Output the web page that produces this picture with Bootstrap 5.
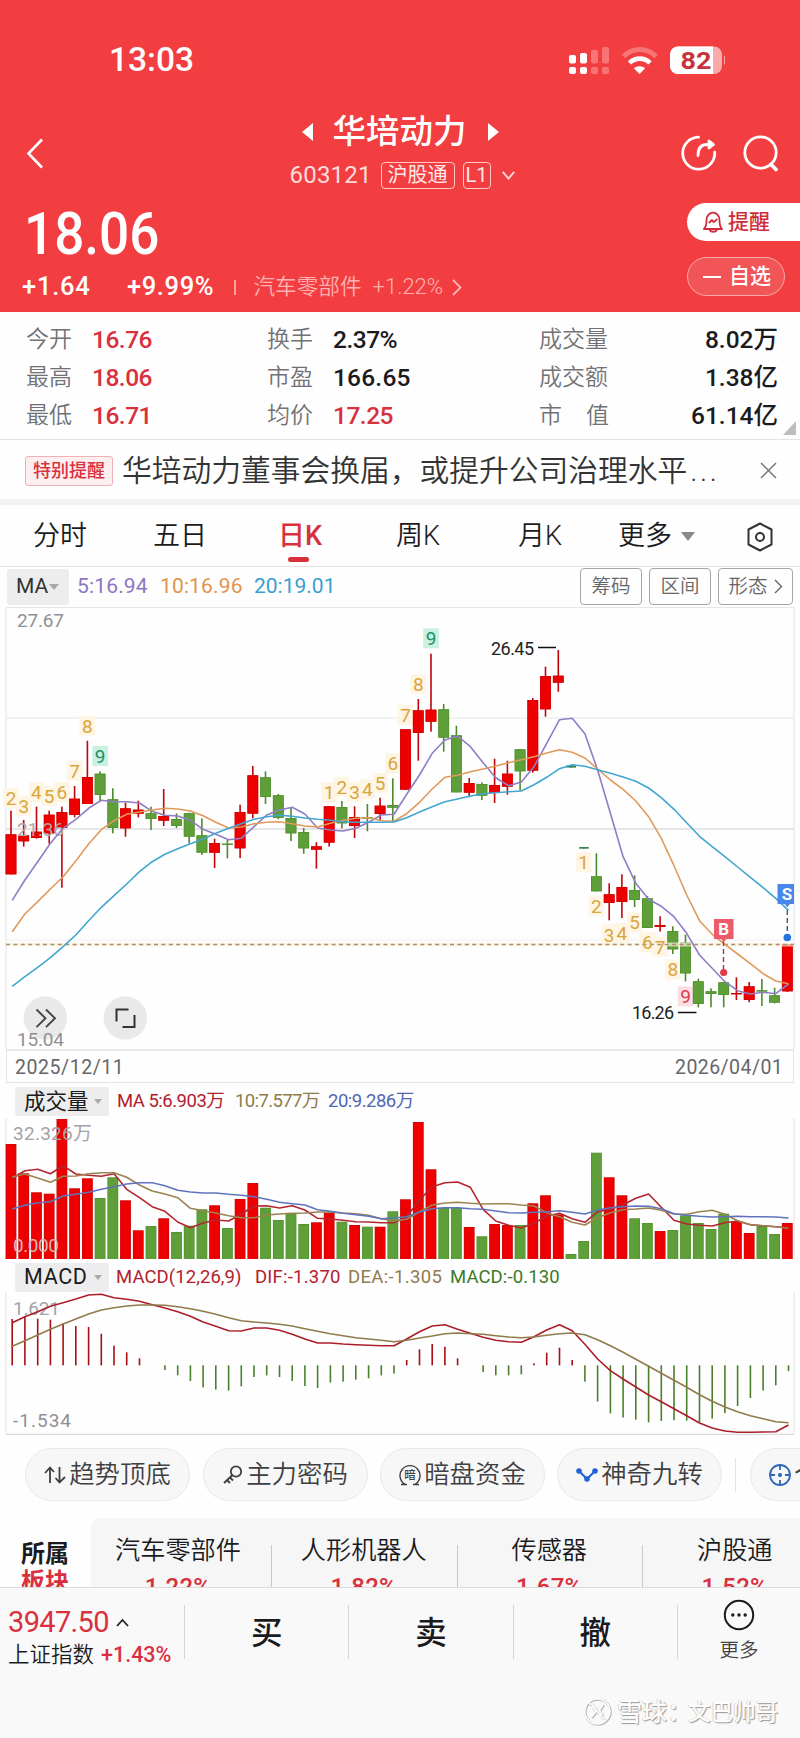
<!DOCTYPE html>
<html lang="zh-CN">
<head>
<meta charset="utf-8">
<meta name="viewport" content="width=device-width, initial-scale=1">
<title>华培动力 603121</title>
<link href="https://cdn.jsdelivr.net/npm/bootstrap@5.3.0/dist/css/bootstrap.min.css" rel="stylesheet">
<style>
  :root { --brand:#f23e41; --up:#d9303e; --ink:#1b1b1d; --sub:#727276; --line:#e4e4e6; }
  body { width:800px; height:1738px; overflow:hidden; margin:0; background:#fefefe; color:var(--ink);
         font-family:Roboto,"Noto Sans CJK SC",sans-serif; line-height:1; }
  svg { display:block; flex:none; }
  svg text { font-family:Roboto,"Noto Sans CJK SC",sans-serif; }
  .fit { display:inline-block; white-space:nowrap; flex:none; }
  .up { color:var(--up); }
  .hero { background:var(--brand); height:312px; color:#fff; padding-top:42px; }
  .status { height:35px; padding:0 75px 0 109px; }
  .clock { font-size:33.5px; font-weight:500; }
  .topnav { display:grid; grid-template-columns:150px 1fr 150px; height:84px; margin-top:34px; }
  .stock-name { font-size:33.5px; font-weight:500; height:42px; }
  .stock-code { font-size:24px; height:44px; padding-left:4px; color:#ffdcdc; }
  .tagbox { border:1.5px solid #ffc9c9; border-radius:4px; height:27px; font-size:20px; color:#ffe9e9; }
  .quote { height:117px; }
  .price { font-size:59px; font-weight:500; height:60px; padding:9px 0 0 24px; }
  .price .fit { transform:scaleX(.9); transform-origin:left; }
  .delta { font-size:25.5px; font-weight:500; height:34px; margin-top:15px; padding-left:22px; }
  .delta .sector { font-size:21.6px; font-weight:350; color:#ffb3b3; }
  .pill-r { width:113px; height:38px; border-radius:19px 0 0 19px; font-size:21px; font-weight:500; margin-top:8px; padding-left:16px; color:#cf2b3a; }
  .pill-o { width:98px; height:39px; border-radius:20px; font-size:21px; font-weight:500; margin-top:16px; border:1.5px solid #fba9aa; background:#f15558; padding-left:15px; }
  .stats { display:grid; grid-template-columns:66px 175px 66px 206px 1fr; grid-auto-rows:38px; align-items:center;
           height:128px; padding:9px 22px 5px 26px; position:relative; border-bottom:1.5px solid var(--line); align-content:center; }
  .stats .k { font-size:23px; font-weight:350; color:var(--sub); }
  .stats .v { font-size:24.5px; font-weight:500; padding-top:2px; }
  .corner { position:absolute; right:4px; bottom:4px; }
  .notice { height:59px; padding:2px 0 0 25px; }
  .notice-tag { width:88px; height:30px; border:1.5px solid #f0b0b6; border-radius:3px; background:#fdeef0; color:var(--up); font-size:18px; font-weight:500; }
  .notice-text { font-size:29.75px; font-weight:350; color:#333; margin-left:9px; width:602px; white-space:nowrap; }
  .notice-text .dots { letter-spacing:2.6px; margin-left:3px; }
  .band { height:6px; background:#f3f3f4; }
  .tabs { height:62px; border-bottom:1.5px solid var(--line); font-size:27px; font-weight:350; padding-left:33px; padding-top:2px; position:relative; }
  .tabs .cell { width:120px; flex:none; }
  .tabs .on { color:var(--up); font-weight:500; position:relative; }
  .tabs .on::after { content:""; position:absolute; left:10px; top:37px; width:21px; height:5px; border-radius:3px; background:var(--up); }
  .ma-row { height:39px; padding-left:7px; font-size:21px; }
  .drop { background:#ededee; border-radius:3px; }
  .tool { height:37px; border:1.5px solid #a5a5a8; border-radius:4px; font-size:19.5px; font-weight:350; color:#666; }
  .date-row { height:33px; font-size:19.5px; color:#66666a; margin:0 6px; border:solid var(--line); border-width:1px; padding:2px 7px 0 8px; }
  .sub-head { height:35px; padding:2px 0 0 15px; font-size:18.5px; }
  .sub-head .drop { width:94px; height:29px; padding-left:9px; font-size:21.5px; }
  .chips { height:83px; padding:13px 0 0 25px; overflow:hidden; }
  .chip { height:53px; width:165px; border:1.5px solid #e8e8ea; border-radius:27px; background:#f7f7f8; font-size:25.4px; font-weight:350; color:#3f3f42; flex:none; padding-top:1px; }
  .boards { height:69px; overflow:hidden; }
  .boards-t { width:91px; padding:22px 0 0 21px; font-size:24px; font-weight:700; line-height:28px; flex:none; }
  .boards-l { background:#f6f6f7; border-radius:8px 0 0 0; }
  .board { width:185.5px; padding-top:19px; font-size:25.2px; font-weight:350; text-align:center; line-height:28px; flex:none; position:relative; }
  .board .pct { font-size:24px; font-weight:500; margin-top:10px; line-height:24px; }
  .board + .board::before { content:""; position:absolute; left:0; top:27px; bottom:0; width:1px; background:#c9c9cc; }
  .dock { height:151px; background:#f9f9f9; border-top:1.5px solid #dcdcde; }
  .dock-row { height:54px; margin-top:17px; }
  .act { width:164.3px; border-left:1.5px solid #d5d5d7; font-size:31.5px; font-weight:500; height:54px; padding-top:3px; flex:none; }
  .wm { color:#fdfdfd; text-shadow:1px 1px 1px #999,-.5px -.5px 0 #bbb; font-size:22.5px; font-weight:500; padding:0 23px 0 584px; height:36px; margin-top:35px; }
</style>
</head>
<body>

<header class="hero">
  <div class="status d-flex align-items-center justify-content-between">
    <span class="clock fit" data-w="88">13:03</span>
    <svg width="160" height="32" viewBox="564 42 160 32">
      <g fill="#fff">
        <rect x="568" y="53" width="7" height="8.5" rx="2"/><rect x="568" y="65" width="7" height="7" rx="2"/>
        <rect x="579" y="51" width="7" height="10.5" rx="2"/><rect x="579" y="65" width="7" height="7" rx="2"/>
      </g>
      <g fill="#f97476">
        <rect x="590" y="48" width="7" height="13.5" rx="2"/><rect x="590" y="65" width="7" height="7" rx="2"/>
        <rect x="601" y="45" width="7" height="16.5" rx="2"/><rect x="601" y="65" width="7" height="7" rx="2"/>
      </g>
      <path d="M622.5 54.5a22.5 22.5 0 0 1 32.5 0" fill="none" stroke="#f97476" stroke-width="5"/>
      <path d="M628.5 61a14.3 14.3 0 0 1 20.5 0" fill="none" stroke="#fff" stroke-width="4.6"/>
      <path d="M632.8 66.3a9 9 0 0 1 11.4 0L638.5 72z" fill="#fff"/>
      <rect x="669" y="44.5" width="52" height="27.5" rx="8" fill="#fbaaab"/>
      <path d="M677 44.500H712V72H677a8 8 0 0 1-8-8V52.500a8 8 0 0 1 8-8z" fill="#fff"/>
      <path d="M723 53.500a5.500 5.500 0 0 1 0 9z" fill="#fbaaab"/>
      <text x="679.500" y="66.800" font-size="24" font-weight="700" fill="#c9323a" textLength="31" lengthAdjust="spacingAndGlyphs">82</text>
    </svg>
  </div>

  <nav class="topnav">
    <svg width="60" height="84" viewBox="0 111 60 84"><path d="M42 139.500 28.500 153.500 42 167.500" fill="none" stroke="#fff" stroke-width="2.600"/></svg>
    <div>
      <div class="stock-name d-flex align-items-center justify-content-center">
        <svg width="11" height="18"><path d="M11 0v18L0 9z" fill="#fff"/></svg>
        <span class="fit text-center" style="margin:0 21px 0 20px">华培动力</span>
        <svg width="11" height="18"><path d="M0 0v18l11-9z" fill="#fff"/></svg>
      </div>
      <div class="stock-code d-flex align-items-center justify-content-center">
        <span class="fit" data-w="85">603121</span>
        <span class="tagbox d-flex align-items-center justify-content-center" style="width:74px;margin-left:6px">沪股通</span>
        <span class="tagbox d-flex align-items-center justify-content-center" style="width:28px;margin:0 11px 0 8px">L1</span>
        <svg width="13" height="9"><path d="M.8.8 6.500 7.500 12.200.8" fill="none" stroke="#ffdcdc" stroke-width="1.800"/></svg>
      </div>
    </div>
    <svg width="150" height="84" viewBox="649.500 111 150 84" fill="none" stroke="#fff" stroke-width="2.800" stroke-linecap="round" stroke-linejoin="round">
      <path d="M698 137.200a16 16 0 1 0 16.200 15"/>
      <path d="M697.500 155.500c0-7 3-11 9-11h4"/><path d="M708.500 141l4.500 3.500-4.500 3.500z" fill="#fff"/>
      <circle cx="760" cy="152.500" r="15.700"/><path d="M770.500 164.500l5 5" stroke-width="3.800"/>
    </svg>
  </nav>

  <div class="quote d-flex justify-content-between">
    <div>
      <div class="price"><span class="fit" data-w="154">18.06</span></div>
      <div class="delta d-flex align-items-center">
        <span class="fit" data-w="105">+1.64</span><span class="fit" data-w="107">+9.99%</span>
        <span style="width:1.500px;height:15px;background:#fba0a1;margin-right:18px"></span>
        <span class="sector fit" style="width:119px">汽车零部件</span><span class="sector fit" style="font-size:22px" data-w="74">+1.22%</span>
        <svg width="10" height="17" style="margin-left:5px"><path d="M1 1l7.500 7.500L1 16" fill="none" stroke="#ffb3b3" stroke-width="1.800"/></svg>
      </div>
    </div>
    <div style="width:113px">
      <div class="pill-r bg-white d-flex align-items-center">
        <svg width="20" height="22" viewBox="702.500 211 20 22" fill="none" stroke="#cf2b3a" stroke-width="1.800" stroke-linejoin="round"><path d="M703.500 229h18c-2-2-2.500-4-2.500-8.500 0-10.500-13-10.500-13 0 0 4.500-.5 6.500-2.500 8.500z"/><path d="M709 229.500c1 3 6.500 3 7.500 0M708.800 222.500l2.700-2.500 1.700 2.200 3-2.700" stroke-linecap="round"/></svg>
        <span style="margin-left:5px">提醒</span>
      </div>
      <div class="pill-o d-flex align-items-center">
        <span class="bg-white" style="width:18px;height:2px;margin-right:8px"></span>自选
      </div>
    </div>
  </div>
</header>

<section class="stats">
  <span class="k">今开</span><span class="v up"><span class="fit" data-w="64">16.76</span></span><span class="k">换手</span><span class="v"><span class="fit" data-w="68">2.37%</span></span><span class="d-flex justify-content-between align-items-center"><span class="k">成交量</span><span class="v">8.02万</span></span>
  <span class="k">最高</span><span class="v up"><span class="fit" data-w="64">18.06</span></span><span class="k">市盈</span><span class="v"><span class="fit" data-w="80">166.65</span></span><span class="d-flex justify-content-between align-items-center"><span class="k">成交额</span><span class="v">1.38亿</span></span>
  <span class="k">最低</span><span class="v up"><span class="fit" data-w="64">16.71</span></span><span class="k">均价</span><span class="v up"><span class="fit" data-w="64">17.25</span></span><span class="d-flex justify-content-between align-items-center"><span class="k">市<span class="ms-4">值</span></span><span class="v">61.14亿</span></span>
  <svg class="corner" width="13" height="14"><path d="M13 0v14H0z" fill="#bdbdc0"/></svg>
</section>

<section class="notice d-flex align-items-center">
  <span class="notice-tag d-flex align-items-center justify-content-center">特别提醒</span>
  <span class="notice-text">华培动力董事会换届，或提升公司治理水平<span class="dots">...</span></span>
  <svg width="17" height="17" style="margin-left:36px"><path d="M1 1l15 15M16 1 1 16" stroke="#777" stroke-width="1.500"/></svg>
</section>
<div class="band"></div>

<nav class="tabs d-flex align-items-center">
  <span class="cell">分时</span><span class="cell">五日</span><span class="cell" style="padding-left:5px"><span class="on">日K</span></span><span class="cell" style="padding-left:3px">周K</span><span class="cell" style="padding-left:5px;width:105px">月K</span>
  <span>更多</span>
  <svg width="14" height="9" style="margin-left:9px"><path d="M0 0h14L7 9z" fill="#8a8a8d"/></svg>
  <svg width="28" height="30" viewBox="0 0 28 30" style="margin-left:51px" fill="none" stroke="#333" stroke-width="2"><path d="M14 1.500 25.500 7.500v15L14 28.500 2.500 22.500v-15z" stroke-linejoin="round"/><circle cx="14" cy="15" r="4"/></svg>
</nav>

<section class="ma-row d-flex align-items-center">
  <span class="drop d-flex align-items-center" style="width:62px;height:36px;padding-left:9px;color:#333"><span style="width:33px">MA</span><svg width="10" height="6"><path d="M0 0h10L5 6z" fill="#a9a9ac"/></svg></span>
  <span class="fit" data-w="83" style="color:#8b76c4;margin-left:8px">5:16.94</span>
  <span class="fit" data-w="94" style="color:#e0944c">10:16.96</span>
  <span class="fit" data-w="84" style="color:#3a9fd0">20:19.01</span>
  <span class="tool d-flex align-items-center justify-content-center" style="width:62px;margin-left:auto">筹码</span>
  <span class="tool d-flex align-items-center justify-content-center" style="width:62px;margin-left:7px">区间</span>
  <span class="tool d-flex align-items-center justify-content-center" style="width:75px;margin:0 7px">形态<svg width="9" height="15" style="margin-left:6px"><path d="M1 1l6.500 6.500L1 14" fill="none" stroke="#666" stroke-width="1.400"/></svg></span>
</section>

<svg id="kline" width="800" height="444" viewBox="0 606 800 444"></svg>
<div class="date-row d-flex align-items-center justify-content-between"><span class="fit" data-w="112">2025/12/11</span><span class="fit" data-w="111">2026/04/01</span></div>

<div class="sub-head d-flex align-items-center">
  <span class="drop d-flex align-items-center">成交量<svg width="8" height="5" style="margin-left:5px"><path d="M0 0h8L4 5z" fill="#a9a9ac"/></svg></span>
  <span class="fit" data-w="118" style="color:#b3202c;margin-left:8px">MA 5:6.903万</span>
  <span class="fit" data-w="93" style="color:#8f7b4b">10:7.577万</span>
  <span class="fit" data-w="89" style="color:#5267ae">20:9.286万</span>
</div>
<svg id="volume" width="800" height="141" viewBox="0 1118 800 141"></svg>

<div class="sub-head d-flex align-items-center" style="height:34px">
  <span class="drop d-flex align-items-center"><span class="fit" data-w="66">MACD</span><svg width="8" height="5" style="margin-left:4px"><path d="M0 0h8L4 5z" fill="#a9a9ac"/></svg></span>
  <span class="fit" data-w="139" style="color:#b3202c;margin-left:7px">MACD(12,26,9)</span>
  <span class="fit" data-w="93" style="color:#b3202c">DIF:-1.370</span>
  <span class="fit" data-w="102" style="color:#8f7b4b">DEA:-1.305</span>
  <span class="fit" data-w="113" style="color:#3c7a27">MACD:-0.130</span>
</div>
<svg id="macd" width="800" height="142" viewBox="0 1293 800 142"></svg>

<section class="chips d-flex">
  <span class="chip d-flex align-items-center justify-content-center"><svg width="22" height="18" style="margin-right:3px" viewBox="0 0 22 18" fill="none" stroke="#3f3f42" stroke-width="1.800"><path d="M6 17V2M1 7l5-5.500L10 6M15.500 1v15M11.500 12l4 4.500L21 11"/></svg>趋势顶底</span>
  <span class="chip d-flex align-items-center justify-content-center" style="margin-left:13px"><svg width="20" height="20" style="margin-right:3px" viewBox="0 0 20 20" fill="none" stroke="#3f3f42" stroke-width="1.800"><circle cx="13" cy="6.500" r="5.200"/><path d="M9 10.500 1 18M4 15l3 3M7 12.500l3 3"/></svg>主力密码</span>
  <span class="chip d-flex align-items-center justify-content-center" style="margin-left:12px"><svg width="22" height="22" style="margin-right:3px" viewBox="0 0 22 22"><path d="M6 20.300a10 10 0 1 1 10 0M2 20.500h6M14 20.500h6" fill="none" stroke="#3f3f42" stroke-width="1.400"/><text x="11" y="15.300" font-size="11.500" text-anchor="middle" fill="#3f3f42" font-weight="500">暗</text></svg>暗盘资金</span>
  <span class="chip d-flex align-items-center justify-content-center" style="margin-left:12px"><svg width="22" height="14" style="margin-right:3px" viewBox="0 0 22 14"><path d="M3 3l8 8 8-8" fill="none" stroke="#1f63d6" stroke-width="2"/><g fill="#1f63d6"><circle cx="3" cy="3" r="2.800"/><circle cx="11" cy="11" r="2.800"/><circle cx="19" cy="3" r="2.800"/></g></svg>神奇九转</span>
  <span style="width:1px;height:34px;margin:10px 14px 0 13px;background:#e2e2e4;flex:none"></span>
  <span class="chip d-flex align-items-center" style="padding-left:18px"><svg width="22" height="22" style="margin-right:3px" viewBox="0 0 22 22" fill="none" stroke="#2f66b8" stroke-width="1.800"><circle cx="11" cy="11" r="10"/><path d="M11 1v5M11 16v5M1 11h5M16 11h5"/><circle cx="11" cy="11" r="1.200" fill="#2f66b8"/></svg>个</span>
</section>

<section class="boards d-flex">
  <div class="boards-t">所属<div class="up">板块</div></div>
  <div class="boards-l d-flex flex-grow-1 overflow-hidden">
    <div class="board" style="width:180px;padding-right:6px">汽车零部件<div class="pct up"><span class="fit" data-w="69">1.22%</span></div></div>
    <div class="board">人形机器人<div class="pct up"><span class="fit" data-w="69">1.82%</span></div></div>
    <div class="board">传感器<div class="pct up"><span class="fit" data-w="69">1.67%</span></div></div>
    <div class="board">沪股通<div class="pct up"><span class="fit" data-w="69">1.52%</span></div></div>
  </div>
</section>

<footer class="dock">
  <div class="dock-row d-flex">
    <div style="width:184px;padding-left:8px;flex:none">
      <div class="up d-flex align-items-center" style="font-size:29px;height:30px;margin-top:2px"><span class="fit" data-w="104">3947.50</span><svg width="13" height="9" style="margin-left:4px"><path d="M1 8l5.500-6L12 8" fill="none" stroke="#222" stroke-width="1.800"/></svg></div>
      <div class="d-flex align-items-center" style="font-size:21.500px;height:30px;margin-top:3px"><span style="width:93px;font-weight:350">上证指数</span><span class="up fit" data-w="73" style="font-weight:500">+1.43%</span></div>
    </div>
    <div class="act d-flex align-items-center justify-content-center">买</div>
    <div class="act d-flex align-items-center justify-content-center">卖</div>
    <div class="act d-flex align-items-center justify-content-center">撤</div>
    <div class="act d-flex flex-column align-items-center" style="width:123px;font-size:19.500px;font-weight:350;color:#444">
      <svg width="32" height="32" viewBox="0 0 32 32" style="margin-top:-9px"><circle cx="16" cy="16" r="14.200" fill="none" stroke="#1b1b1d" stroke-width="2"/><g fill="#1b1b1d"><circle cx="9.800" cy="16" r="1.700"/><circle cx="16" cy="16" r="1.700"/><circle cx="22.200" cy="16" r="1.700"/></g></svg>
      <span style="margin-top:10px">更多</span>
    </div>
  </div>
  <div class="wm d-flex align-items-center">
    <svg width="28" height="28" viewBox="0 0 28 28" fill="none"><g stroke="#b5b5b5" stroke-width="2.400"><circle cx="14" cy="14" r="12.500"/><path d="M6 6c4 1 5 4 8 8s5 7 8 8M9 9l4 5-5 6M20 7l-4 6 3 5"/></g><g stroke="#fdfdfd" stroke-width="1.700" transform="translate(-.700 -.700)"><circle cx="14" cy="14" r="12.500"/><path d="M6 6c4 1 5 4 8 8s5 7 8 8M9 9l4 5-5 6M20 7l-4 6 3 5"/></g></svg>
    <span class="fit" style="margin-left:5px;font-size:25px;width:71px">雪球：</span><span class="fit">文巴帅哥</span>
  </div>
</footer>

<script>
// Spread each figure over its column by adjusting the tracking
document.querySelectorAll('.fit[data-w]').forEach(el => {
  const n = el.textContent.length, w = +el.dataset.w;
  const slack = { 105: 37, 107: 20, 83: 12, 94: 12, 118: 10, 93: 8, 139: 13, 102: 8 }[w] || 3;
  const gap = (w - slack - el.offsetWidth) / (n - 1);
  el.style.letterSpacing = gap.toFixed(3) + 'px';
  el.style.width = w + 'px';
});

const RED = '#ee0000', GREEN = '#5f9f3a', DKRED = '#a80f14', DKGREEN = '#4a7f2c';
const X = i => 11 + 12.727 * i;
const rect = (x, y, w, h, f) => `<rect x="${x.toFixed(1)}" y="${y.toFixed(1)}" width="${w}" height="${h.toFixed(1)}" fill="${f}"/>`;
const text = (x, y, s, f, size, extra = '') => `<text x="${x}" y="${y}" font-size="${size}" fill="${f}" ${extra}>${s}</text>`;
const hline = (y, c = '#e6e6e8', w = 1.200) => `<path d="M6 ${y}H794" stroke="${c}" stroke-width="${w}"/>`;
const sides = (a, b) => `<path d="M6 ${a}V${b}M794 ${a}V${b}" stroke="#e6e6e8" stroke-width="1.200"/>`;
// Series are stored in thirds of a pixel below the panel origin
const curve = (vals, y0, c, w = 1.600) => `<polyline fill="none" stroke="${c}" stroke-width="${w}" stroke-linejoin="round" points="${vals.map((v, i) => (X(i) + 1.200).toFixed(1) + ',' + (y0 + v / 3).toFixed(1)).join(' ')}"/>`;

// high, open/close top, open/close bottom, low
const candles = `r632 703 823 823|r660 706 724 740|r620 695 714 716|r632 644 700 731|r620 636 684 863|r558 596 645 652|r422 531 612 612|g514 521 585 605|g565 598 684 700|r608 625 685 710|r602 629 641 652|g620 640 657 690|r567 648 662 678|g640 657 678 684|g638 640 710 730|g655 706 758 765|r716 729 758 804|g720 731 735 775|r614 636 745 774|r498 526 641 655|g514 532 591 612|g582 586 654 658|g622 654 700 723|g684 696 745 761|r727 739 749 806|r619 619 728 740|g603 621 670 685|r619 651 678 714|g612 652 655 694|r593 617 642 660|g535 615 623 668|r388 388 569 569|r297 331 399 482|r161 329 365 395|g312 328 413 455|g377 406 577 577|r534 549 578 592|g547 552 587 600|r476 555 578 609|r482 521 560 584|g448 448 514 572|r294 300 512 518|r200 228 328 350|r150 227 248 275|g496 496 503 503|g741 741 746 746|g760 829 874 874|r850 883 909 961|r823 861 906 954|g826 870 900 921|g888 895 984 984|r949 975 981 995|g979 993 1048 1062|g1004 1028 1120 1144|g1136 1144 1212 1222|g1165 1174 1182 1222|g1147 1147 1185 1222|r1132 1179 1183 1200|r1146 1159 1200 1207|g1137 1171 1174 1218|g1163 1186 1208 1210|r1032 1032 1174 1176`
  .split('|').map(s => ({ up: s[0] === 'r', v: s.slice(1).split(' ').map(Number) }));
const ma5 = [901,840,785,730,685,658,625,601,605,605,609,634,646,648,661,688,703,719,715,680,645,630,622,642,684,690,693,685,667,645,643,583,525,460,420,408,440,488,533,557,546,500,430,359,355,401,510,640,770,850,898,919,950,1000,1065,1105,1145,1172,1182,1177,1181,1152];
const ma10 = [995,942,905,867,830,783,732,689,662,643,636,630,625,627,633,647,667,684,681,671,667,665,671,678,681,670,661,655,653,662,664,641,607,567,532,526,515,507,498,488,479,470,459,449,457,474,507,540,568,603,650,715,797,885,962,1003,1033,1062,1091,1121,1143,1151];
const ma20 = [1159,1130,1102,1073,1040,1005,962,922,887,852,815,785,763,746,731,717,700,685,671,658,650,646,649,654,658,661,665,667,667,667,666,653,636,620,605,597,588,581,578,575,573,554,532,506,494,499,509,520,531,544,564,593,628,668,709,740,770,801,832,863,895,931];
const turns = [[0,597,2],[1,620,3],[2,580,4],[3,591,5],[4,579,6],[5,515,7],[6,380,8],[7,471,9,'g'],[25,580,1],[26,563,2],[27,578,3],[28,571,4],[29,552,5],[30,493,6],[31,348,7],[32,256,8],[33,118,9,'g'],[45,790,1],[46,920,2],[47,1007,3],[48,1001,4],[49,970,5],[50,1030,6],[51,1043,7],[52,1111,8],[53,1192,9,'r']];

let k = sides(607, 1050) + hline(607.500) + hline(718) + hline(829, '#e6e6e8', 1.800) + hline(940, '#f0f0f2') + hline(1049.800);
turns.forEach(([i, y, n, t]) => {
  k += rect(X(i) - 7.800, 600 + y / 3 - 11, 15.600, 20, t === 'g' ? '#c9f1e0' : t === 'r' ? '#fcdfe3' : '#fef5e4');
});
candles.forEach(({ up, v }, i) => {
  const [h, a, b, l] = v.map(n => 600 + n / 3), c = up ? RED : GREEN;
  k += rect(X(i) - .8, h, 1.600, l - h, up ? '#c0060c' : '#4d8a2c');
  if (i === 44 || i === 45) k += rect(X(i) - 4.500, a, 9.500, b - a, '#3e8050');
  else k += rect(X(i) - 5.400, a, 10.800, b - a, c) + `<rect x="${X(i) - 5}" y="${a + .4}" width="10" height="${Math.max(.5, b - a - .8)}" fill="none" stroke="${up ? '#c00' : '#4e8f2c'}" stroke-width=".7"/>`;
});
k += `<path d="M6 944.500H794" stroke="#fdf3e2" stroke-width="4" opacity=".7"/><path d="M6 944.500H794" stroke="#a89068" stroke-width="1.500" stroke-dasharray="4 3.400"/>`;
k += text(17, 627, '27.67', '#909094', 19, 'textLength="47"') + text(17, 836, '21.36', '#b5a5a8', 19, 'textLength="47"');
k += curve(ma5, 600, '#8f7dc6') + curve(ma10, 600, '#e09a5c') + curve(ma20, 600, '#42a6d0');
turns.forEach(([i, y, n, t]) => {
  k += text(X(i), 606 + y / 3, n, t === 'g' ? '#1f9067' : t === 'r' ? '#d8414f' : '#dba53a', 19, 'text-anchor="middle"');
});
k += `<circle cx="45.300" cy="1018" r="21.700" fill="#e9e9ea"/><circle cx="125.300" cy="1018" r="21.700" fill="#e9e9ea"/>
  <path d="M36.500 1009.500l9 8.800-9 8.800M46 1009.500l9 8.800-9 8.800" fill="none" stroke="#444" stroke-width="1.900"/>
  <path d="M128.500 1009.500H116.500V1021.500M122.500 1027H134.500V1015" fill="none" stroke="#333" stroke-width="2"/>`;
k += text(17, 1045.500, '15.04', '#909094', 19, 'textLength="47"');
k += text(491, 654.500, '26.45', '#222', 18, 'textLength="43"') + `<path d="M538 647.500H556M678 1012.500H696.500" stroke="#111" stroke-width="1.700"/>`;
k += text(632, 1019, '16.26', '#222', 18, 'textLength="42"');
k += `<path d="M723.500 941V970" stroke="#a03a4a" stroke-width="1.400" stroke-dasharray="5 3"/><circle cx="723.700" cy="972.500" r="3.600" fill="#e23a48"/>
  <path d="M714 919h19.500v20h-7l-2.700 3-2.700-3H714z" fill="#ec5b6b"/>` + text(723.700, 935, 'B', '#fff', 17, 'text-anchor="middle" font-weight="700"');
k += `<path d="M787.300 910V935" stroke="#3d5a78" stroke-width="1.400" stroke-dasharray="5 3"/><circle cx="787.300" cy="937.500" r="3.800" fill="#2472e0"/>
  <path d="M777.500 884h16.500v20h-4l-2.700 3-2.700-3h-7.100z" fill="#4a87ea"/>` + text(787, 900, 'S', '#fff', 17, 'text-anchor="middle" font-weight="700"');
document.getElementById('kline').innerHTML = k;

const vol = [312,400,457,461,237,445,415,474,412,481,571,558,535,576,557,508,496,564,477,429,503,540,520,552,547,518,545,555,560,560,514,478,246,388,503,503,561,589,552,555,555,490,466,523,642,603,338,412,466,535,549,573,570,526,549,567,521,543,579,558,582,549];
const v5 = [415,392,388,401,377,402,406,409,401,448,473,500,514,546,563,549,540,543,522,498,497,504,497,510,535,537,541,545,546,548,548,530,480,440,428,426,442,508,543,556,564,550,528,520,536,547,515,508,494,475,462,502,541,552,556,558,548,543,554,557,560,563];
const v10 = [411,402,414,427,409,408,401,398,398,412,435,453,462,473,505,512,519,527,533,533,525,522,520,519,516,516,519,521,526,536,543,538,515,495,489,487,490,492,491,491,495,498,518,530,547,555,533,518,509,507,504,511,522,523,515,511,523,542,554,557,560,565];
const v20 = [507,496,488,485,468,463,457,448,440,432,428,428,437,451,456,459,459,463,466,470,478,487,491,495,509,514,520,524,529,536,534,530,516,506,503,503,506,508,513,518,519,517,515,512,517,522,510,503,500,498,499,506,521,526,529,531,530,529,530,530,531,534];
let q = sides(1118, 1259);
vol.forEach((t, i) => {
  const r = candles[i].up, y = 1040 + t / 3;
  q += rect(X(i) - 5.400, y, 10.800, 1259 - y, r ? '#c40808' : '#4e8f2c') + rect(X(i) - 4.800, y + .6, 9.600, 1259 - y - .6, r ? RED : GREEN);
});
q += text(13, 1140, '32.326万', '#a3a3a6', 19, 'textLength="79"') + text(13, 1252, '0.000', '#d8b5b5', 19, 'textLength="46"');
q += curve(v5, 1040, '#b32630') + curve(v10, 1040, '#9a8350') + curve(v20, 1040, '#6074bd');
document.getElementById('volume').innerHTML = q;

const bars = [192,184,191,194,204,213,216,236,272,292,310,331,345,361,378,397,404,407,394,366,361,366,378,393,399,383,380,374,370,361,356,315,283,267,275,310,331,351,361,361,358,325,293,278,315,380,440,475,488,494,502,498,496,497,502,491,474,453,429,407,391,348];
const dif = [203,185,170,154,143,132,120,118,128,133,139,149,159,170,184,201,214,227,228,219,219,226,238,252,264,264,267,269,271,272,272,252,230,213,209,223,235,247,256,260,262,245,225,209,227,268,312,347,372,396,420,440,461,482,504,519,528,532,532,531,530,510];
const dea = [274,257,240,223,207,192,177,165,158,153,150,150,151,155,161,169,178,188,197,201,204,208,213,221,229,236,242,248,252,256,260,256,249,243,236,234,236,238,242,246,248,246,241,236,234,239,254,272,292,313,334,355,376,397,419,439,456,470,482,491,500,503];
let m = sides(1293, 1434) + hline(1434.300, '#dcdcde') + text(13, 1315, '1.621', '#a3a3a6', 19, 'textLength="47"') + text(13, 1427, '-1.534', '#909094', 19, 'textLength="58"');
bars.forEach((b, i) => {
  if (b === 331) return;
  m += rect(X(i) + .4, 1255 + Math.min(b, 331) / 3, 1.600, Math.abs(b - 331) / 3, b < 331 ? DKRED : DKGREEN);
});
m += curve(dif, 1255, '#ab1f2b') + curve(dea, 1255, '#8f7b4b');
document.getElementById('macd').innerHTML = m;
</script>
<script src="https://cdn.jsdelivr.net/npm/bootstrap@5.3.0/dist/js/bootstrap.bundle.min.js"></script>
</body>
</html>
